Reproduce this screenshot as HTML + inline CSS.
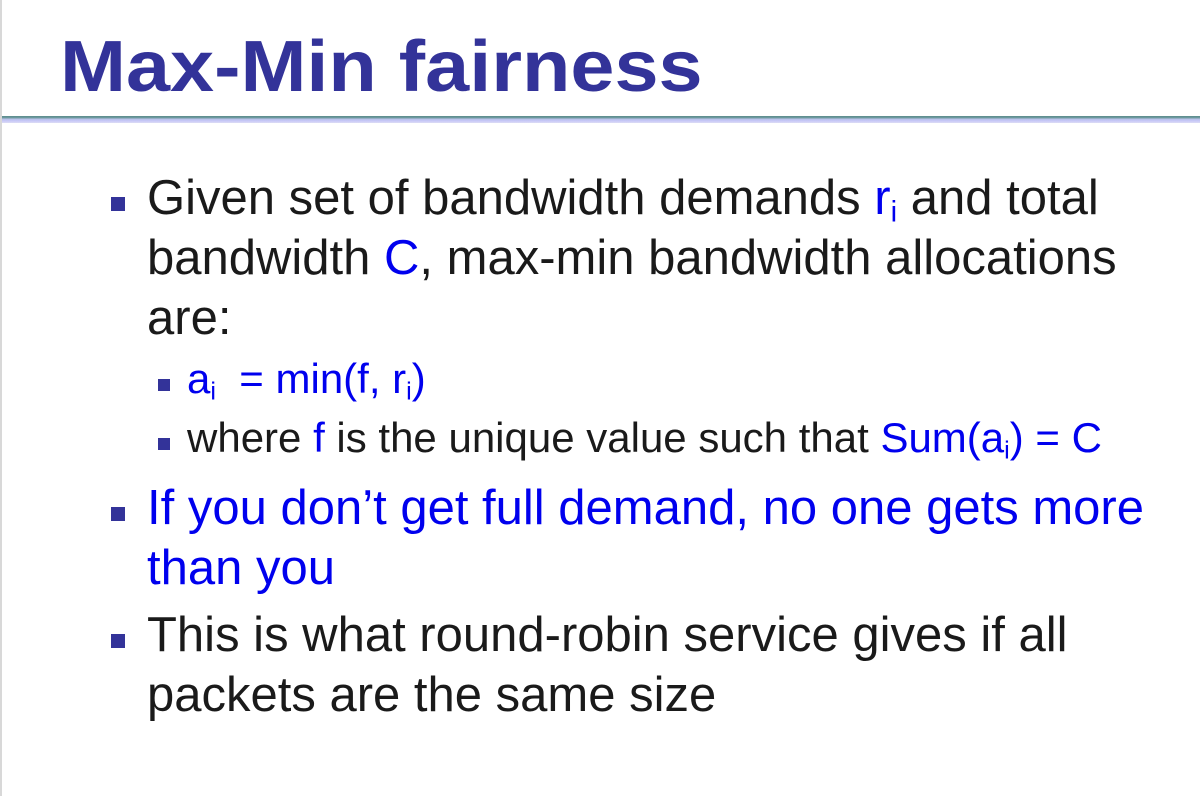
<!DOCTYPE html>
<html><head><style>
body{margin:0;width:1200px;height:796px;background:#fff;position:relative;overflow:hidden;font-family:"Liberation Sans",Arial,sans-serif;}
.lb{position:absolute;left:0;top:0;width:2px;height:796px;background:#d8d8d8}
h1{position:absolute;left:60px;top:26px;margin:0;font-size:72px;line-height:83px;font-weight:bold;color:#333399;white-space:nowrap;transform:scaleX(1.1);transform-origin:left;}
.rule{position:absolute;left:2px;top:116px;width:1198px;height:7px;background:linear-gradient(#5a8a8a 0,#6e9aa0 25%,#b8c0e8 45%,#c8c8f8 70%,#dcdcf4 100%)}
.l{position:absolute;white-space:nowrap;color:#1a1a1a}
.b1{font-size:49px;left:147px}
.b2{font-size:42px;left:187px}
.sq{position:absolute;background:#333399}
.s1{left:111px;width:14px;height:14px}
.s2{left:158px;width:12px;height:12px}
.blue{color:#0000ee}
sub{font-size:60%;vertical-align:-0.25em}
</style></head><body>
<div class="lb"></div>
<h1>Max-Min fairness</h1>
<div class="rule"></div>

<div class="sq s1" style="top:197px"></div>
<div class="l b1" style="top:170px">Given set of bandwidth demands <span class="blue">r<sub>i</sub></span> and total</div>
<div class="l b1" style="top:230px">bandwidth <span class="blue">C</span>, max-min bandwidth allocations</div>
<div class="l b1" style="top:290px">are:</div>

<div class="sq s2" style="top:379px"></div>
<div class="l b2 blue" style="top:355px">a<sub>i</sub>&nbsp; = min(f, r<sub>i</sub>)</div>
<div class="sq s2" style="top:438px"></div>
<div class="l b2" style="top:414px">where <span class="blue">f</span> is the unique value such that <span class="blue">Sum(a<sub>i</sub>) = C</span></div>

<div class="sq s1" style="top:507px"></div>
<div class="l b1 blue" style="top:480px">If you don’t get full demand, no one gets more</div>
<div class="l b1 blue" style="top:540px">than you</div>

<div class="sq s1" style="top:634px"></div>
<div class="l b1" style="top:607px">This is what round-robin service gives if all</div>
<div class="l b1" style="top:667px">packets are the same size</div>
</body></html>
